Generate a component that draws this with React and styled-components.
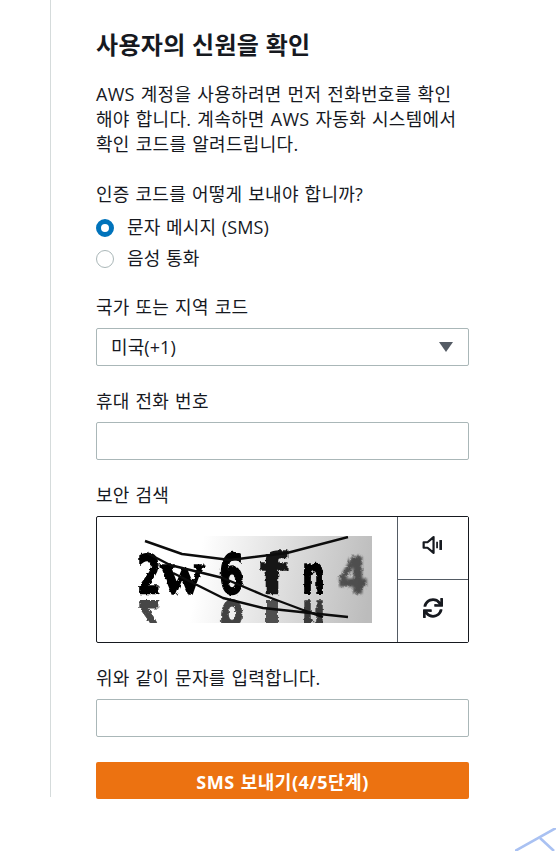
import React from 'react';
import styled, { createGlobalStyle } from 'styled-components';
import { FaSync } from 'react-icons/fa';

const GlobalStyle = createGlobalStyle`
  html, body {
    margin: 0;
    padding: 0;
    background: #fff;
  }
  body {
    font-family: "Open Sans", "Noto Sans CJK KR", sans-serif;
    color: #16191f;
    overflow: hidden;
  }
`;

const Page = styled.div`
  position: relative;
  width: 556px;
  height: 851px;
  overflow: hidden;
`;

const Rail = styled.div`
  box-sizing: border-box;
  margin-left: 50px;
  height: 797px;
  width: 419px;
  padding: 30px 0 0 45px;
  border-left: 1px solid #d5dbdb;
`;

const Title = styled.h1`
  margin: 0 0 22px;
  font-size: 24px;
  line-height: 30px;
  font-weight: 700;
  letter-spacing: 0.3px;
`;

const Intro = styled.p`
  margin: 0 0 25px;
  font-size: 18px;
  line-height: 25px;
  font-weight: 400;
  letter-spacing: 0.3px;
  word-spacing: 1px;
`;

const Label = styled.div`
  font-size: 18px;
  line-height: 24px;
  margin-bottom: ${p => p.$gap || 9}px;
  letter-spacing: 0.25px;
  word-spacing: 1px;
`;

const Field = styled.div`
  margin-bottom: ${p => p.$gap || 23}px;
`;

const RadioRow = styled.label`
  display: flex;
  align-items: center;
  gap: 13px;
  height: 31px;
  font-size: 18px;
  letter-spacing: 0.1px;
  word-spacing: 1px;
`;

const RadioText = styled.span`
  margin-top: -3px;
`;

const Radio = styled.span`
  box-sizing: border-box;
  width: 18px;
  height: 18px;
  border-radius: 50%;
  background: #fff;
  border: ${p => (p.$on ? '5.5px solid #0073bb' : '1px solid #aab7b8')};
`;

const SelectBox = styled.div`
  box-sizing: border-box;
  display: flex;
  align-items: center;
  justify-content: space-between;
  height: 38px;
  padding: 0 15px 3px 14px;
  border: 1px solid #aab7b8;
  border-radius: 2px;
  font-size: 18px;
  letter-spacing: 0.1px;
`;

const Caret = styled.span`
  width: 0;
  height: 0;
  margin-top: 3px;
  border-left: 7px solid transparent;
  border-right: 7px solid transparent;
  border-top: 10px solid #545b64;
`;

const TextInput = styled.input`
  display: block;
  box-sizing: border-box;
  width: 100%;
  height: 38px;
  border: 1px solid #aab7b8;
  border-radius: 2px;
  background: #fff;
  outline: none;
`;

const CaptchaBox = styled.div`
  box-sizing: border-box;
  display: flex;
  height: 127px;
  border: 1px solid #16191f;
  border-radius: 2px;
`;

const CaptchaImage = styled.div`
  flex: 1;
  display: flex;
  align-items: flex-start;
  padding: 19px 0 0 35px;
`;

const CaptchaTools = styled.div`
  width: 70px;
  display: flex;
  flex-direction: column;
  border-left: 1px solid #545b64;
`;

const ToolButton = styled.button`
  flex: 1;
  display: flex;
  align-items: center;
  justify-content: center;
  padding: 0 0 6px;
  border: none;
  background: #fff;
  color: #16191f;
  & + & {
    border-top: 1px solid #545b64;
  }
`;

const SubmitButton = styled.button`
  display: block;
  width: 100%;
  height: 37px;
  border: none;
  border-radius: 2px;
  background: #ec7211;
  color: #fff;
  font-family: inherit;
  font-size: 18px;
  font-weight: 700;
  letter-spacing: 0.5px;
  word-spacing: 1px;
`;

const Backdrop = styled.svg`
  position: absolute;
  right: 0;
  bottom: 0;
`;

const SANS = "'DejaVu Sans', sans-serif";
const SERIF = "'Liberation Serif', serif";

const captchaChars = [
  { c: '2', x: 5, w: 24, size: 54, o: 1, font: SANS },
  { c: 'w', x: 28, w: 44, size: 62, o: 1, font: SERIF },
  { c: '6', x: 87, w: 25, size: 56, o: 1, font: SANS },
  { c: 'f', x: 128, w: 27, size: 56, o: 0.9, font: SANS },
  { c: 'n', x: 170, w: 23, size: 54, o: 1, font: SANS },
  { c: '4', x: 206, w: 30, size: 50, o: 0.6, font: SANS, soft: true },
];

const Captcha = () => (
  <svg width="240" height="87" viewBox="0 0 240 87">
    <defs>
      <linearGradient id="bg" gradientUnits="userSpaceOnUse" x1="68" y1="20" x2="240" y2="48">
        <stop offset="0" stopColor="#fff" />
        <stop offset="1" stopColor="#bcbcbc" />
      </linearGradient>
      <filter id="rough" x="-10%" y="-10%" width="120%" height="120%">
        <feTurbulence type="fractalNoise" baseFrequency="0.28" numOctaves="2" seed="4" />
        <feDisplacementMap in="SourceGraphic" scale="4" />
        <feGaussianBlur stdDeviation="0.5" />
      </filter>
      <filter id="soft" x="-20%" y="-20%" width="140%" height="140%">
        <feGaussianBlur stdDeviation="1.1" />
      </filter>
      <clipPath id="reflect">
        <rect x="0" y="61" width="240" height="26" />
      </clipPath>
    </defs>
    <rect width="240" height="87" fill="url(#bg)" />
    <g filter="url(#rough)" stroke="#000" strokeWidth="1.6">
      {captchaChars.map(ch => (
        <text key={ch.c} x={ch.x} y="57" fontFamily={ch.font} fontWeight="700" fontSize={ch.size}
          textLength={ch.w} lengthAdjust="spacingAndGlyphs" opacity={ch.o}
          filter={ch.soft ? 'url(#soft)' : undefined}>{ch.c}</text>
      ))}
    </g>
    <g clipPath="url(#reflect)">
      <g transform="matrix(1 0 0 -1 0 122)" filter="url(#rough)" stroke="#000" strokeWidth="1">
        {captchaChars.filter(ch => ch.c !== '4' && ch.c !== 'w').map(ch => (
          <text key={ch.c} x={ch.x} y="57" fontFamily={ch.font} fontWeight="700" fontSize={ch.size}
            textLength={ch.w} lengthAdjust="spacingAndGlyphs" opacity={ch.o * 0.72}>{ch.c}</text>
        ))}
      </g>
    </g>
    <g fill="none" stroke="#0c0c0c" strokeWidth="2.4" strokeLinejoin="round">
      <polyline points="13,5 50,18 98,24 155,17 216,1" />
      <polyline points="15,17 38,29 91,42 131,59 171,74 191,81" />
      <polyline points="41,37 91,62 131,72 216,81" />
    </g>
  </svg>
);

const SpeakerIcon = () => (
  <svg width="22" height="22" viewBox="0 0 20 20" fill="none" stroke="#16191f">
    <path d="M1.5 7.5 H5 L10.5 2.8 V17.2 L5 12.5 H1.5 Z" strokeWidth="2" strokeLinejoin="round" />
    <path d="M13.7 7 V13" strokeWidth="1.6" />
    <path d="M17 5.5 V14.5" strokeWidth="2.4" />
  </svg>
);

export default function App() {
  return (
    <Page>
      <GlobalStyle />
      <Rail>
        <Title>사용자의 신원을 확인</Title>
        <Intro>
          AWS 계정을 사용하려면 먼저 전화번호를 확인
          <br />해야 합니다. 계속하면 AWS 자동화 시스템에서
          <br />확인 코드를 알려드립니다.
        </Intro>
        <Field $gap={21}>
          <Label $gap={6}>인증 코드를 어떻게 보내야 합니까?</Label>
          <RadioRow><Radio $on /><RadioText>문자 메시지 (SMS)</RadioText></RadioRow>
          <RadioRow><Radio /><RadioText>음성 통화</RadioText></RadioRow>
        </Field>
        <Field>
          <Label>국가 또는 지역 코드</Label>
          <SelectBox>미국(+1)<Caret /></SelectBox>
        </Field>
        <Field>
          <Label>휴대 전화 번호</Label>
          <TextInput />
        </Field>
        <Field>
          <Label>보안 검색</Label>
          <CaptchaBox>
            <CaptchaImage><Captcha /></CaptchaImage>
            <CaptchaTools>
              <ToolButton><SpeakerIcon /></ToolButton>
              <ToolButton><FaSync size={20} /></ToolButton>
            </CaptchaTools>
          </CaptchaBox>
        </Field>
        <Field $gap={25}>
          <Label>위와 같이 문자를 입력합니다.</Label>
          <TextInput />
        </Field>
        <SubmitButton>SMS 보내기(4/5단계)</SubmitButton>
      </Rail>
      <Backdrop width="41" height="23" viewBox="0 0 41 23">
        <g stroke="#a9c1f2" strokeWidth="2.6" fill="none">
          <path d="M0 23 L41 0" />
          <path d="M25 10 L39 23" />
        </g>
      </Backdrop>
    </Page>
  );
}
